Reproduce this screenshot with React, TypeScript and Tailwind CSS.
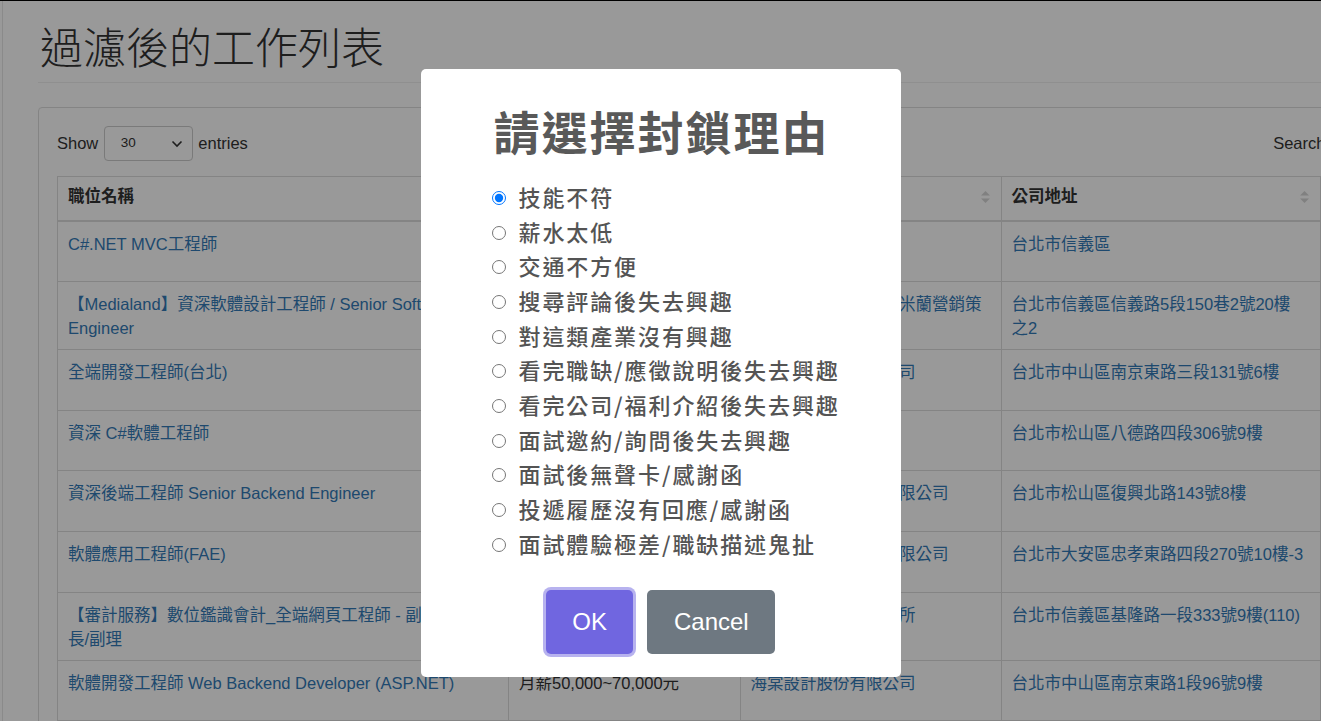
import { useState } from 'react';

type Row = {
  title: string[];
  salary: string;
  company: string[];
  address: string[];
  h: string;
};

const rows: Row[] = [
  { title: ['C#.NET MVC工程師'], salary: '月薪40,000~60,000元', company: ['凱鈿行動科技'], address: ['台北市信義區'], h: 'h-[60px]' },
  {
    title: ['【Medialand】資深軟體設計工程師 / Senior Software', 'Engineer'],
    salary: '月薪60,000~90,000元',
    company: ['美迪亞蘭數位科技暨米蘭營銷策', '略有限公司'],
    address: ['台北市信義區信義路5段150巷2號20樓', '之2'],
    h: 'h-[68px]',
  },
  { title: ['全端開發工程師(台北)'], salary: '月薪45,000~70,000元', company: ['群創數位科技有限公司'], address: ['台北市中山區南京東路三段131號6樓'], h: 'h-[61px]' },
  { title: ['資深 C#軟體工程師'], salary: '月薪55,000~80,000元', company: ['宏碁資訊'], address: ['台北市松山區八德路四段306號9樓'], h: 'h-[60px]' },
  { title: ['資深後端工程師 Senior Backend Engineer'], salary: '月薪65,000~95,000元', company: ['台灣雲端服務股份有限公司'], address: ['台北市松山區復興北路143號8樓'], h: 'h-[61px]' },
  { title: ['軟體應用工程師(FAE)'], salary: '月薪40,000~55,000元', company: ['智慧聯網系統股份有限公司'], address: ['台北市大安區忠孝東路四段270號10樓-3'], h: 'h-[61px]' },
  {
    title: ['【審計服務】數位鑑識會計_全端網頁工程師 - 副組長/組', '長/副理'],
    salary: '待遇面議',
    company: ['資誠聯合會計師事務所'],
    address: ['台北市信義區基隆路一段333號9樓(110)'],
    h: 'h-[68px]',
  },
  { title: ['軟體開發工程師 Web Backend Developer (ASP.NET)'], salary: '月薪50,000~70,000元', company: ['海棠設計股份有限公司'], address: ['台北市中山區南京東路1段96號9樓'], h: 'h-[60px]' },
];

const reasons = [
  '技能不符',
  '薪水太低',
  '交通不方便',
  '搜尋評論後失去興趣',
  '對這類產業沒有興趣',
  '看完職缺/應徵說明後失去興趣',
  '看完公司/福利介紹後失去興趣',
  '面試邀約/詢問後失去興趣',
  '面試後無聲卡/感謝函',
  '投遞履歷沒有回應/感謝函',
  '面試體驗極差/職缺描述鬼扯',
];

function SortIcon() {
  return (
    <svg width="11" height="14" viewBox="0 0 11 14" className="shrink-0">
      <path d="M5.5 1 L10 5.5 H1 Z" fill="#d6d6d6" />
      <path d="M5.5 13 L10 8.5 H1 Z" fill="#d6d6d6" />
    </svg>
  );
}

function Lines({ lines }: { lines: string[] }) {
  return (
    <>
      {lines.map((l, i) => (
        <div key={i} className="whitespace-nowrap">
          {l}
        </div>
      ))}
    </>
  );
}

export default function App() {
  const [reason, setReason] = useState(reasons[0]);

  return (
    <div className="relative h-screen w-full overflow-hidden border-t border-black bg-white font-['Liberation_Sans','Noto_Sans_CJK_TC',sans-serif] text-[#333]">
      <div className="ml-[2px] h-full border-l border-[#e6e6e6] pl-[35px]">
        {/* 標題 */}
        <h1 className="pl-[2px] pt-[21px] font-['Noto_Sans_CJK_TC',sans-serif] text-[43px] font-light leading-[46px] text-[#333]">
          過濾後的工作列表
        </h1>
        <div className="mt-[14px] h-px w-[1500px] bg-[#eee]" />

        {/* 表格面板 */}
        <div className="mt-[24px] w-fit rounded-[4px] border border-[#ddd] p-[18px]">
          <div className="mb-[15px] flex h-[35px] items-center justify-between text-[16.5px]">
            <div className="flex items-center">
              <span>Show</span>
              <div className="mx-[5.5px] flex h-[35px] w-[89px] items-center justify-between rounded-[4px] border border-[#ccc] pl-[16px] pr-[9px] text-[13.5px]">
                <span>30</span>
                <svg width="12" height="8" viewBox="0 0 12 8">
                  <path d="M1.5 1.5 L6 6 L10.5 1.5" fill="none" stroke="#333" strokeWidth="1.6" />
                </svg>
              </div>
              <span>entries</span>
            </div>
            <div className="flex items-center gap-[5px]">
              <span>Search:</span>
              <div className="h-[35px] w-[180px] rounded-[4px] border border-[#ccc]" />
            </div>
          </div>

          <table className="w-[1458px] table-fixed border-collapse border border-[#ddd] text-[16.5px]">
            <colgroup>
              <col className="w-[451px]" />
              <col className="w-[231.5px]" />
              <col className="w-[261px]" />
              <col className="w-[319.5px]" />
              <col />
            </colgroup>
            <thead>
              <tr>
                {['職位名稱', '薪資待遇', '公司名稱', '公司地址', '操作'].map((t) => (
                  <th
                    key={t}
                    className="border border-b-2 border-[#ddd] pb-[12px] pl-[10px] pr-[10px] pt-[8px] text-left font-bold leading-[23px]"
                  >
                    <div className="flex items-center justify-between">
                      <span>{t}</span>
                      <SortIcon />
                    </div>
                  </th>
                ))}
              </tr>
            </thead>
            <tbody>
              {rows.map((r, i) => (
                <tr key={i} className={r.h}>
                  <td className="overflow-hidden border border-[#ddd] px-[10px] pt-[10px] align-top leading-[24px] text-[#337ab7]">
                    <Lines lines={r.title} />
                  </td>
                  <td className="overflow-hidden border border-[#ddd] px-[10px] pt-[10px] align-top leading-[24px]">
                    <div className="whitespace-nowrap">{r.salary}</div>
                  </td>
                  <td className="overflow-hidden border border-[#ddd] px-[10px] pt-[10px] align-top leading-[24px] text-[#337ab7]">
                    <Lines lines={r.company} />
                  </td>
                  <td className="overflow-hidden border border-[#ddd] px-[10px] pt-[10px] align-top leading-[24px] text-[#337ab7]">
                    <Lines lines={r.address} />
                  </td>
                  <td className="border border-[#ddd]" />
                </tr>
              ))}
            </tbody>
          </table>
        </div>
      </div>

      {/* 封鎖理由對話框 */}
      <div className="absolute inset-0 flex items-start justify-center bg-black/40 pt-[68px]">
        <div className="flex w-[480px] flex-col rounded-[5px] bg-white pb-[23px] pt-[34px]">
          <h2 className="pl-[2px] text-center font-['Noto_Sans_CJK_TC',sans-serif] text-[46px] font-bold leading-[55px] tracking-[2px] text-[#595959]">
            請選擇封鎖理由
          </h2>

          <div className="mt-[22.5px] flex flex-col pl-[71px]">
            {reasons.map((r) => (
              <label key={r} className="flex h-[34.7px] items-center">
                <input
                  type="radio"
                  name="reason"
                  checked={reason === r}
                  onChange={() => setReason(r)}
                  className="m-0 h-[14px] w-[14px]"
                />
                <span className="ml-[13px] pb-[4px] font-['Noto_Sans_CJK_TC',sans-serif] text-[22px] font-medium leading-none tracking-[1.9px] text-[#545454]">
                  {r}
                </span>
              </label>
            ))}
          </div>

          <div className="mt-[27.5px] flex justify-center gap-[14px] font-['Liberation_Sans',sans-serif] text-[24px] text-white">
            <button className="h-[64px] rounded-[5px] bg-[#7066e0] px-[26.5px] shadow-[0_0_0_3px_rgba(112,102,224,0.5)]">
              OK
            </button>
            <button className="h-[64px] rounded-[5px] bg-[#6e7881] px-[26.5px]">Cancel</button>
          </div>
        </div>
      </div>
    </div>
  );
}
